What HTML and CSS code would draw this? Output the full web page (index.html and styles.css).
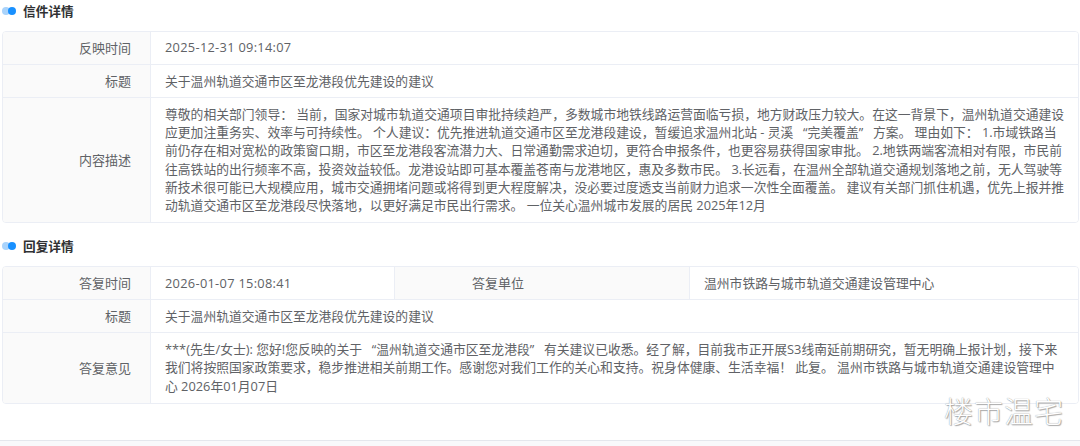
FILE: index.html
```html
<!DOCTYPE html>
<html lang="zh-CN">
<head>
<meta charset="utf-8">
<title>信件详情</title>
<link rel="stylesheet" href="styles.css">
</head>
<body>
<main class="page">
  <section class="block">
    <h2 class="heading"><span class="dots"><i class="dot-back"></i><i class="dot-front"></i></span>信件详情</h2>
    <div class="table letter">
      <div class="label row-a">反映时间</div><div class="value row-a"><span class="stamp">2025-12-31 09:14:07</span></div>
      <div class="label row-b">标题</div><div class="value row-b">关于温州轨道交通市区至龙港段优先建设的建议</div>
      <div class="label row-last">内容描述</div><div class="value row-last text">尊敬的相关部门领导： 当前，国家对城市轨道交通项目审批持续趋严，多数城市地铁线路运营面临亏损，地方财政压力较大。在这一背景下，温州轨道交通建设应更加注重务实、效率与可持续性。 个人建议：优先推进轨道交通市区至龙港段建设，暂缓追求温州北站 - 灵溪&ensp; “完美覆盖” &ensp;方案。 理由如下： 1.市域铁路当前仍存在相对宽松的政策窗口期，市区至龙港段客流潜力大、日常通勤需求迫切，更符合申报条件，也更容易获得国家审批。 2.地铁两端客流相对有限，市民前往高铁站的出行频率不高，投资效益较低。龙港设站即可基本覆盖苍南与龙港地区，惠及多数市民。 3.长远看，在温州全部轨道交通规划落地之前，无人驾驶等新技术很可能已大规模应用，城市交通拥堵问题或将得到更大程度解决，没必要过度透支当前财力追求一次性全面覆盖。 建议有关部门抓住机遇，优先上报并推动轨道交通市区至龙港段尽快落地，以更好满足市民出行需求。 一位关心温州城市发展的居民 2025年12月</div>
    </div>
  </section>
  <section class="block reply-block">
    <h2 class="heading"><span class="dots"><i class="dot-back"></i><i class="dot-front"></i></span>回复详情</h2>
    <div class="table reply">
      <div class="label row-c">答复时间</div><div class="value row-c"><span class="stamp">2026-01-07 15:08:41</span></div><div class="label row-c mid">答复单位</div><div class="value row-c">温州市铁路与城市轨道交通建设管理中心</div>
      <div class="label row-d">标题</div><div class="value row-d wide">关于温州轨道交通市区至龙港段优先建设的建议</div>
      <div class="label row-last">答复意见</div><div class="value row-last text wide">***(先生/女士): 您好!您反映的关于&ensp; “温州轨道交通市区至龙港段” &ensp;有关建议已收悉。经了解，目前我市正开展S3线南延前期研究，暂无明确上报计划，接下来我们将按照国家政策要求，稳步推进相关前期工作。感谢您对我们工作的关心和支持。祝身体健康、生活幸福！ 此复。 温州市铁路与城市轨道交通建设管理中心 2026年01月07日</div>
    </div>
  </section>
  <div class="footer-rule"></div>
</main>
<div class="watermark">楼市温宅</div>
</body>
</html>
```
FILE: styles.css
```css
html, body {
  margin: 0;
  height: 446px;
  overflow: hidden;
  background: #fff;
}
body {
  font-family: "Open Sans", "Noto Sans CJK SC", sans-serif;
  font-size: 12.8px;
  color: #606266;
}
.page {
  padding: 0 1px 0 2px;
  display: flex;
  flex-direction: column;
  height: 446px;
  box-sizing: border-box;
}
.block { display: flex; flex-direction: column; }
.heading {
  margin: 0;
  height: 31px;
  display: flex;
  align-items: flex-start;
  font-size: 12.7px;
  line-height: 22px;
  font-weight: 700;
  color: #303133;
}
.dots {
  position: relative;
  width: 21px;
  height: 22px;
  flex: none;
}
.dot-back, .dot-front {
  position: absolute;
  top: 7px;
  width: 8px;
  height: 8px;
  border-radius: 50%;
}
.dot-back { left: 0; background: #a9d3fb; }
.dot-front { left: 6px; background: #1890ff; }
.table {
  display: grid;
  border: 1px solid #ebeef5;
  border-radius: 4px;
  overflow: hidden;
}
.letter { grid-template-columns: 148px 1fr; }
.reply { grid-template-columns: 148px 243px 296px 1fr; }
.label, .value {
  display: flex;
  align-items: center;
  box-sizing: border-box;
  padding: 0 14px 2px;
  border-bottom: 1px solid #ebeef5;
}
.label {
  justify-content: flex-end;
  padding-right: 19px;
  font-size: 13px;
  background: #fafafa;
  border-right: 1px solid #ebeef5;
}
.value { background: #fff; }
.stamp { letter-spacing: 0.3px; }
.row-a, .row-b { height: 33px; }
.row-c, .row-d { height: 33px; padding-bottom: 1px; }
.mid {
  padding-right: 165px;
  border-left: 1px solid #ebeef5;
}
.wide { grid-column: 2 / -1; }
.row-last { border-bottom: 0; }
.text {
  padding: 7px 12px 8px 14px;
  line-height: 18.2px;
  display: block;
}
.reply-block { margin-top: 12px; }
.footer-rule {
  margin: auto -1px 0 -2px;
  height: 5px;
  border-top: 1px solid #e4e7ed;
  background: #f8f9fb;
}
.watermark {
  position: absolute;
  right: 16px;
  top: 395px;
  font-family: "Noto Sans CJK SC", sans-serif;
  font-size: 29px;
  line-height: 30px;
  letter-spacing: 1px;
  font-weight: 300;
  color: #fff;
  text-shadow: 0 0 1px #888, 1px 1px 1px #aaa;
}
```
